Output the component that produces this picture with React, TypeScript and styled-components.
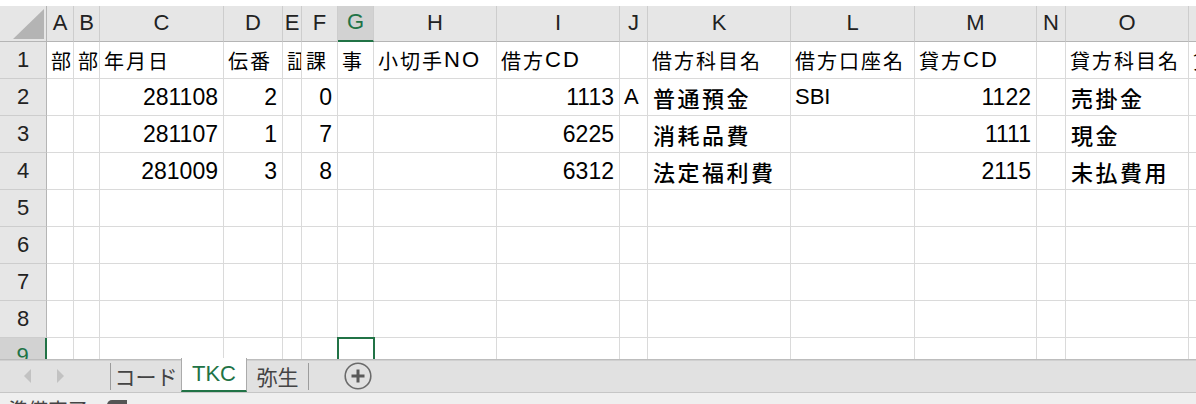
import React from "react";
import styled, { createGlobalStyle, css } from "styled-components";

const GREEN = "#217346";

const GlobalStyle = createGlobalStyle`
  html, body {
    margin: 0;
    padding: 0;
    background: #fff;
    overflow: hidden;
  }
  body {
    font-family: "Liberation Sans", "Noto Sans CJK JP", sans-serif;
    color: #000;
  }
`;

const COLUMNS = ["A", "B", "C", "D", "E", "F", "G", "H", "I", "J", "K", "L", "M", "N", "O", "P"];
const WIDTHS = [27, 26, 124, 59, 19, 36, 36, 123, 123, 28, 143, 124, 122, 29, 123, 120];

const ROWS: string[][] = [
  ["部", "部", "年月日", "伝番", "証", "課", "事", "小切手NO", "借方CD", "", "借方科目名", "借方口座名", "貸方CD", "", "貸方科目名", "貸方口座名"],
  ["", "", "281108", "2", "", "0", "", "", "1113", "A", "普通預金", "SBI", "1122", "", "売掛金", ""],
  ["", "", "281107", "1", "", "7", "", "", "6225", "", "消耗品費", "", "1111", "", "現金", ""],
  ["", "", "281009", "3", "", "8", "", "", "6312", "", "法定福利費", "", "2115", "", "未払費用", ""],
  [], [], [], [], [],
];

const SELECTED_COL = 6;
const SELECTED_ROW = 9;

type Kind = "label" | "num" | "name" | "latin";

const kindOf = (text: string, row: number): Kind => {
  if (row === 1) return "label";
  if (/^\d+$/.test(text)) return "num";
  if (/^[A-Za-z]+$/.test(text)) return "latin";
  return "name";
};

// kanji/kana runs get extra tracking, latin runs a little less
const CJK_RUN = /([\u3000-\u30ff\u4e00-\u9fff]+)/;

const Window = styled.div`
  width: 1196px;
  height: 404px;
  display: flex;
  flex-direction: column;
  overflow: hidden;
  background: #fff;
`;

const TopGap = styled.div`
  flex: none;
  height: 6px;
  background: #fff;
`;

const Sheet = styled.div`
  flex: none;
  height: 353px;
  overflow: hidden;
  display: grid;
  grid-template-columns: 47px ${WIDTHS.map((w) => `${w}px`).join(" ")};
  grid-template-rows: 36px;
  grid-auto-rows: 37px;
  align-content: start;
`;

const Corner = styled.div`
  position: relative;
  background: #e6e6e6;
  border-right: 1px solid #b5b5b5;
  border-bottom: 1px solid #b5b5b5;
  box-sizing: border-box;

  &::after {
    content: "";
    position: absolute;
    right: 2px;
    bottom: 2px;
    width: 0;
    height: 0;
    border-left: 31px solid transparent;
    border-bottom: 30px solid #b4b4b4;
  }
`;

const ColHead = styled.div<{ $selected?: boolean }>`
  display: flex;
  align-items: center;
  justify-content: center;
  box-sizing: border-box;
  background: #e6e6e6;
  border-right: 1px solid #cdcdcd;
  border-bottom: 1px solid #b5b5b5;
  font-family: "Liberation Sans", sans-serif;
  font-size: 22px;
  color: #222;
  padding-bottom: 2px;
  overflow: hidden;

  ${({ $selected }) =>
    $selected &&
    css`
      background: #d2d2d2;
      color: ${GREEN};
      border-bottom: 2px solid ${GREEN};
    `}
`;

const RowHead = styled.div<{ $selected?: boolean }>`
  display: flex;
  align-items: center;
  justify-content: center;
  box-sizing: border-box;
  background: #e6e6e6;
  border-right: 1px solid #b5b5b5;
  border-bottom: 1px solid #cdcdcd;
  font-family: "Liberation Sans", sans-serif;
  font-size: 22px;
  color: #222;

  ${({ $selected }) =>
    $selected &&
    css`
      background: #d2d2d2;
      color: ${GREEN};
      border-right: 2px solid ${GREEN};
    `}
`;

const kindStyles: Record<Kind, ReturnType<typeof css>> = {
  label: css`
    justify-content: flex-start;
    padding-left: 4px;
    font-size: 20px;
  `,
  num: css`
    justify-content: flex-end;
    padding-right: 5px;
    font-family: "Liberation Sans", sans-serif;
    font-size: 23px;
  `,
  name: css`
    justify-content: flex-start;
    padding-left: 5px;
    font-size: 22px;
    font-weight: 500;
  `,
  latin: css`
    justify-content: flex-start;
    padding-left: 4px;
    font-family: "Liberation Sans", sans-serif;
    font-size: 22px;
  `,
};

const Cell = styled.div<{ $kind: Kind; $active?: boolean }>`
  display: flex;
  align-items: center;
  box-sizing: border-box;
  min-width: 0;
  overflow: hidden;
  white-space: nowrap;
  border-right: 1px solid #dadada;
  border-bottom: 1px solid #dadada;
  background: #fff;
  ${({ $kind }) => kindStyles[$kind]}

  ${({ $active }) =>
    $active &&
    css`
      position: relative;
      z-index: 1;
      overflow: visible;
      outline: 2px solid ${GREEN};
      outline-offset: -1px;
    `}
`;

const Wide = styled.span<{ $gap: number }>`
  letter-spacing: ${({ $gap }) => $gap}px;
  flex: none;
`;

const Plain = styled.span`
  flex: none;
  font-size: 22px;
  letter-spacing: 2px;
`;

const TabBar = styled.div`
  flex: none;
  height: 33px;
  box-sizing: border-box;
  display: flex;
  align-items: stretch;
  background: #e1e1e1;
  border-top: 1px solid #bdbdbd;
  box-shadow: inset 0 1px 0 #d0d0d0;
`;

const NavArea = styled.div`
  width: 110px;
  flex: none;
  display: flex;
  align-items: center;
  box-sizing: border-box;
  padding-left: 24px;
  gap: 26px;
`;

const Arrow = styled.span<{ $dir: "left" | "right" }>`
  width: 0;
  height: 0;
  border-top: 7px solid transparent;
  border-bottom: 7px solid transparent;
  ${({ $dir }) =>
    $dir === "left"
      ? css`
          border-right: 7px solid #c2c2c2;
        `
      : css`
          border-left: 7px solid #c2c2c2;
        `}
`;

const Divider = styled.span`
  flex: none;
  width: 1px;
  margin: 3px 0 2px;
  background: #9c9c9c;
`;

const Tab = styled.div<{ $active?: boolean; $width: number }>`
  width: ${({ $width }) => $width}px;
  flex: none;
  box-sizing: border-box;
  display: flex;
  align-items: center;
  justify-content: center;
  font-family: "Liberation Sans", "Noto Sans CJK JP", sans-serif;
  font-size: 21px;
  color: #444;
  padding-bottom: 1px;

  ${({ $active }) =>
    $active &&
    css`
      margin-top: -2px;
      background: #fff;
      color: ${GREEN};
      font-size: 22px;
      border-left: 1px solid #ababab;
      border-right: 1px solid #ababab;
      border-bottom: 2px solid ${GREEN};
    `}
`;

const AddButton = styled.div`
  margin-left: 35px;
  align-self: center;
  display: flex;
`;

const StatusBar = styled.div`
  flex: none;
  height: 12px;
  box-sizing: border-box;
  overflow: hidden;
  display: flex;
  align-items: flex-start;
  gap: 18px;
  padding: 7px 0 0 8px;
  background: #efefef;
  border-top: 1px solid #c6c6c6;
`;

const StatusText = styled.span`
  font-family: "Noto Sans CJK JP", sans-serif;
  font-size: 20px;
  line-height: 20px;
  color: #444;
`;

const StatusIcon = styled.div`
  margin-top: -1px;
  display: flex;
`;

const TABS = [
  { name: "コード", width: 70 },
  { name: "TKC", width: 66, active: true },
  { name: "弥生", width: 61 },
];

const renderText = (text: string, kind: Kind) => {
  if (kind !== "label" && kind !== "name") return text;
  const gap = kind === "label" ? 2 : 2.5;
  return text
    .split(CJK_RUN)
    .filter(Boolean)
    .map((part, i) =>
      CJK_RUN.test(part) ? (
        <Wide key={i} $gap={gap}>
          {part}
        </Wide>
      ) : (
        <Plain key={i}>{part}</Plain>
      )
    );
};

const App: React.FC = () => {
  const rowCount = ROWS.length;

  return (
    <>
      <GlobalStyle />
      <Window>
        <TopGap />
        <Sheet>
          <Corner />
          {COLUMNS.map((c, i) => (
            <ColHead key={c} $selected={i === SELECTED_COL}>
              {c}
            </ColHead>
          ))}
          {Array.from({ length: rowCount }, (_, r) => {
            const rowNo = r + 1;
            return (
              <React.Fragment key={rowNo}>
                <RowHead $selected={rowNo === SELECTED_ROW}>{rowNo}</RowHead>
                {COLUMNS.map((c, i) => {
                  const text = ROWS[r][i] ?? "";
                  const kind = kindOf(text, rowNo);
                  return (
                    <Cell
                      key={c}
                      $kind={kind}
                      $active={rowNo === SELECTED_ROW && i === SELECTED_COL}
                    >
                      {renderText(text, kind)}
                    </Cell>
                  );
                })}
              </React.Fragment>
            );
          })}
        </Sheet>
        <TabBar>
          <NavArea>
            <Arrow $dir="left" />
            <Arrow $dir="right" />
          </NavArea>
          <Divider />
          {TABS.map((t) => (
            <Tab key={t.name} $active={t.active} $width={t.width}>
              {t.name}
            </Tab>
          ))}
          <Divider />
          <AddButton>
            <svg width="28" height="28" viewBox="0 0 28 28">
              <circle cx="14" cy="14" r="12.8" fill="none" stroke="#6a6a6a" strokeWidth="1.6" />
              <path d="M14 7.5v13M7.5 14h13" stroke="#5a5a5a" strokeWidth="3" />
            </svg>
          </AddButton>
        </TabBar>
        <StatusBar>
          <StatusText>準備完了</StatusText>
          <StatusIcon>
            <svg width="22" height="14" viewBox="0 0 22 14">
              <circle cx="6" cy="6" r="5" fill="#555" />
              <rect x="6" y="1" width="15" height="12" fill="#555" />
            </svg>
          </StatusIcon>
        </StatusBar>
      </Window>
    </>
  );
};

export default App;
